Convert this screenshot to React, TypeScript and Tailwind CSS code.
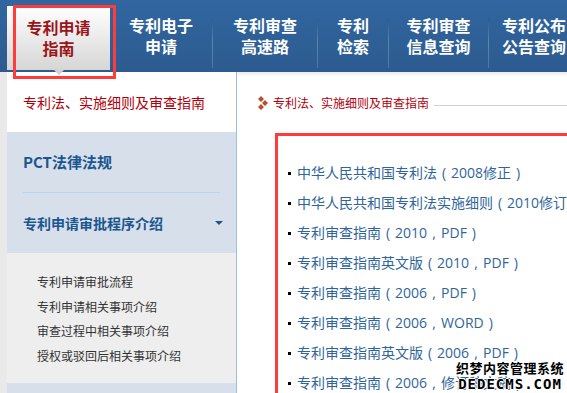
const nav: Array<[string, string]> = [
  ['专利电子', '申请'],
  ['专利审查', '高速路'],
  ['专利', '检索'],
  ['专利审查', '信息查询'],
  ['专利公布', '公告查询'],
];

const subItems = ['专利申请审批流程', '专利申请相关事项介绍', '审查过程中相关事项介绍', '授权或驳回后相关事项介绍'];

const docs = [
  '中华人民共和国专利法（2008修正）',
  '中华人民共和国专利法实施细则（2010修订）',
  '专利审查指南（2010，PDF）',
  '专利审查指南英文版（2010，PDF）',
  '专利审查指南（2006，PDF）',
  '专利审查指南（2006，WORD）',
  '专利审查指南英文版（2006，PDF）',
  '专利审查指南（2006，修订稿文稿）',
];

const font = { fontFamily: '"Noto Sans CJK SC", "Noto Sans", sans-serif' };
const listFont = { fontFamily: '"Open Sans", "Noto Sans CJK SC", sans-serif' };

// full-width punctuation drawn centred in its 1em cell, as the original font does
const punct: Record<string, string> = { '（': '(', '）': ')', '，': ',' };

function DocTitle({ text }: { text: string }) {
  return (
    <>
      {Array.from(text).map((ch, i) =>
        punct[ch] ? (
          <span key={i} className="inline-block w-[1em] text-center">
            {punct[ch]}
          </span>
        ) : (
          <span key={i}>{ch}</span>
        ),
      )}
    </>
  );
}

export default function App() {
  return (
    <div className="relative h-[393px] w-[567px] overflow-hidden bg-white" style={font}>
      <header className="flex h-[72px] bg-gradient-to-b from-[#3166a0] to-[#2c5b8f] pl-[7px]">
        <div className="relative mt-[6px] flex h-[64px] w-[103px] shrink-0 flex-col items-center justify-center bg-gradient-to-b from-white to-[#d6d6d6] text-[16px] font-bold leading-[21px] text-[#9c1419]">
          <span>专利申请</span>
          <span>指南</span>
          <span className="absolute -bottom-[5px] left-1/2 h-0 w-0 -translate-x-1/2 border-x-[5px] border-t-[5px] border-x-transparent border-t-[#d0d0d0]" />
        </div>
        {nav.map(([a, b], i) => (
          <div key={a + b} className="flex shrink-0 items-stretch">
            {i > 0 && <div className="mt-[18px] mb-[4px] w-px bg-gradient-to-b from-[#2c5b8f] via-[#5f86b2] to-[#4a76a8]" />}
            <div
              className={
                'flex flex-col items-center justify-center text-[16px] font-bold leading-[21px] text-white ' +
                ['w-[102px]', 'w-[104px]', 'w-[70px]', 'w-[99px]', 'w-[90px]'][i]
              }
            >
              <span className="whitespace-nowrap">{a}</span>
              <span className="whitespace-nowrap">{b}</span>
            </div>
          </div>
        ))}
      </header>

      <div className="flex h-[321px]">
        <div className="w-[7px] shrink-0 bg-[#e9e9e9]" />
        <aside className="flex w-[230px] shrink-0 flex-col border-r border-[#9dbde0] bg-[#d7e0ea]">
          <div className="flex h-[60px] items-center bg-white pl-4 text-[14px] text-[#b0000b]">专利法、实施细则及审查指南</div>
          <div className="flex h-[60px] items-center pl-4 text-[15px] font-bold text-[#1b5690]">PCT法律法规</div>
          <div className="mx-4 h-px bg-[#b9d3ee]" />
          <div className="flex h-[60px] items-center justify-between pl-4 pr-[13px] text-[14px] font-bold text-[#1b5690]">
            <span>专利申请审批程序介绍</span>
            <span className="h-0 w-0 border-x-[4px] border-t-[4px] border-x-transparent border-t-[#1b5690]" />
          </div>
          <ul className="flex h-[130px] flex-col bg-[#eeeeee] pt-[17px] pl-[30px] text-[12px] leading-[24.5px] text-[#333]">
            {subItems.map((s) => (
              <li key={s}>{s}</li>
            ))}
          </ul>
        </aside>

        <main className="flex-1 bg-gradient-to-b from-[#ececec] via-white to-white bg-[length:100%_10px] bg-no-repeat pl-[21px]">
          <div className="mt-[22px] flex items-center">
            <svg width="12" height="14" viewBox="0 0 12 14" className="mr-[3px]">
              <path d="M3 0 L6 3 L3 6 L0 3Z M3 8 L6 11 L3 14 L0 11Z M7 4 L10 7 L7 10 L4 7Z" fill="#b8502e" />
            </svg>
            <span className="text-[12px] text-[#b0000b]">专利法、实施细则及审查指南</span>
            <div className="ml-[5px] mt-[5px] h-px flex-1 bg-[#cfcfcf]" />
          </div>
          <div className="mt-[21px] ml-[17px] h-[260px] border-[3px] border-b-0 border-[#ff3b3b] pl-[10px] pt-[22px]">
            <ul className="text-[14px] leading-[30px] text-[#30659b]" style={listFont}>
              {docs.map((d) => (
                <li key={d} className="flex items-center whitespace-nowrap">
                  <span className="mr-[6px] h-[3px] w-[3px] shrink-0 bg-black" />
                  <span>
                    <DocTitle text={d} />
                  </span>
                </li>
              ))}
            </ul>
          </div>
        </main>
      </div>

      <div className="absolute left-[13px] top-[5px] h-[74px] w-[103px] border-[3px] border-[#ff3b3b]" />

      <div
        className="absolute right-[3px] bottom-[1px] flex flex-col items-center text-black"
        style={{ textShadow: '1px 0 #fff, -1px 0 #fff, 0 1px #fff, 0 -1px #fff' }}
      >
        <span className="text-[13px] font-bold leading-[16px] tracking-[0.5px]">织梦内容管理系统</span>
        <span className="text-[14px] font-bold leading-[16px] tracking-[1px]" style={{ fontFamily: '"DejaVu Sans Mono", monospace' }}>
          DEDECMS.COM
        </span>
      </div>
    </div>
  );
}
